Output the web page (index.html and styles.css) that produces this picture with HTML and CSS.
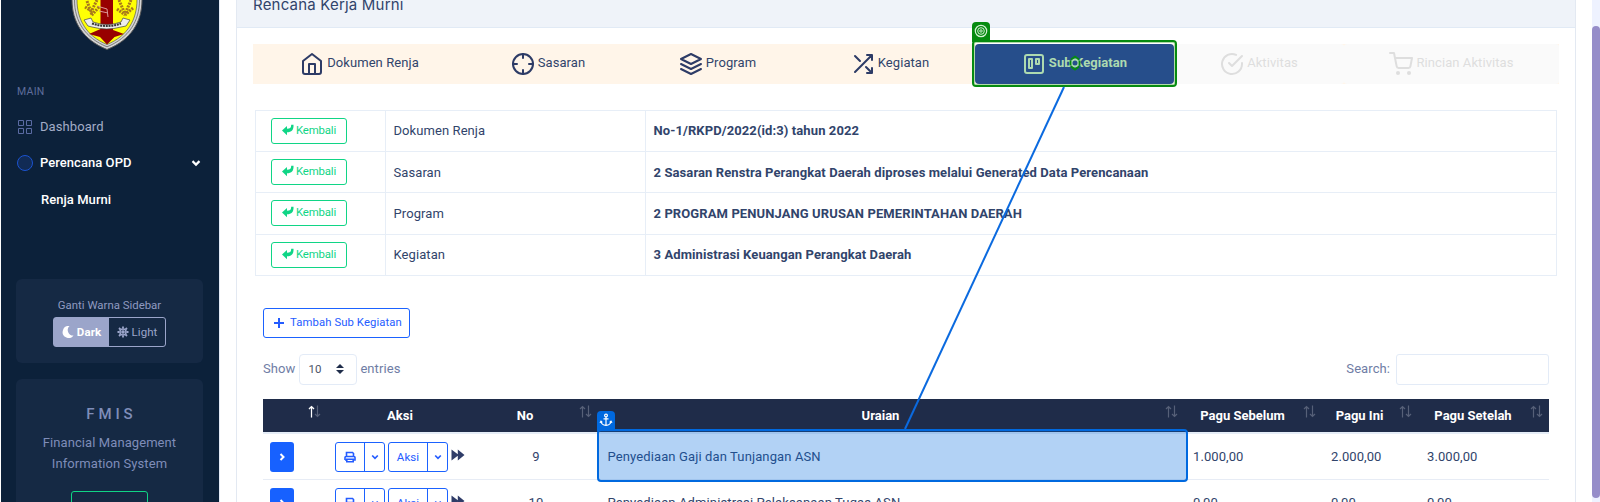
FILE: index.html
```
<!DOCTYPE html>
<html lang="id">
<head>
<meta charset="utf-8">
<title>Rencana Kerja Murni</title>
<link rel="stylesheet" href="styles.css">
</head>
<body>
<svg class="defs" aria-hidden="true">
  <symbol id="back" viewBox="0 0 12 12"><path d="M0 6.500 5 2V4.800C8 4.800 9.200 3.800 9.200.8H11.500C11.900 6 9.500 8.300 5 8.300v2.900z" fill="currentColor"/></symbol>
  <symbol id="chev" viewBox="0 0 8 8"><path d="M1.200 2.500 4 5.300 6.800 2.500" fill="none" stroke="currentColor" stroke-width="1.700"/></symbol>
  <symbol id="chevr" viewBox="0 0 8 8"><path d="M2.500 1 5.500 4 2.500 7" fill="none" stroke="currentColor" stroke-width="2"/></symbol>
  <symbol id="print" viewBox="0 0 12 12"><path d="M2.500 5V1.500h6l1 1V5M1 9V6.500Q1 5.500 2 5.500h8q1 0 1 1V9H9.500M1 9h1.500M2.800 8.200h6.400v2.600H2.800z" fill="none" stroke="currentColor" stroke-width="1.600"/></symbol>
  <symbol id="fwd" viewBox="0 0 14 12"><path d="M.5.500 6.800 5.200V.500L13.500 6 6.800 11.500V6.800L.5 11.500z" fill="currentColor"/></symbol>
  <symbol id="sort" viewBox="0 0 13 13"><path d="M3.500 12.500V1.500M1 4 3.500 1.500 6 4" fill="none" stroke="#566078" stroke-width="1.200"/><path d="M9.500.5v11M7 9l2.500 2.500L12 9" fill="none" stroke="#566078" stroke-width="1.200"/></symbol>
</svg>

<aside class="sidebar">
  <svg class="logo" viewBox="0 0 72 70">
    <path d="M1 0V20C1 42 12 60 36 69.500 60 60 71 42 71 20V0z" fill="#d4d4d4" stroke="#555" stroke-width="1"/>
    <path d="M3.500 0V20C3.500 41 14 58 36 66.800 58 58 68.500 41 68.500 20V0z" fill="none" stroke="#666" stroke-width=".8"/>
    <path d="M6 0V20C6 39 15 56 36 64.500 57 56 66 39 66 20V0z" fill="#ffff05" stroke="#444" stroke-width=".6"/>
    <path d="M29.500 0H42V50L53 54 43.500 57 36 64.500 29 57 18 54 29.500 49z" fill="#980000"/>
    <path d="M26 26 36 29 37 37M28 31 37 33" fill="none" stroke="#d99" stroke-width="1"/>
    <path d="M16 21 21 35M26 20 20 32M14 27l8 5M28 27l-8 9M48 20l6 14M60 20l-6 14M46 29l8 6M62 28l-8 7" stroke="#a8791c" stroke-width="3" stroke-dasharray="2 1"/>
    <path d="M13 40 20 38 22 42Q36 47 50 42L52 38 59 40 55 46 50 47Q36 51 21 47L17 46z" fill="#eee" stroke="#444" stroke-width=".7"/>
    <path d="M21 43.500Q36 48.500 50 43.500" fill="none" stroke="#333" stroke-width="2" stroke-dasharray="2 .8"/>
  </svg>
  <nav class="menu">
    <div class="menu-title">MAIN</div>
    <a class="item"><svg width="16" height="16" viewBox="0 0 16 16" fill="none" stroke="#5b6ba3"><path d="M1.500 1.500h5v5h-5zM9.500 1.500h5v5h-5zM1.500 9.500h5v5h-5zM9.500 9.500h5v5h-5z"/></svg><span>Dashboard</span></a>
    <a class="item active"><i class="dot"></i><span>Perencana OPD</span><svg class="chev" width="10" height="10"><use href="#chev"/></svg></a>
    <a class="item sub">Renja Murni</a>
  </nav>
  <section class="box theme">
    <div class="caption">Ganti Warna Sidebar</div>
    <div class="toggle">
      <span class="on"><svg width="12" height="12" viewBox="0 0 12 12"><path d="M7.500 0A6 6 0 1 0 11.500 9.500 5.500 5.500 0 0 1 7.500 0z" fill="#fff"/></svg>Dark</span>
      <span><svg width="12" height="12" viewBox="0 0 12 12" fill="none" stroke="#9ba5ca"><circle cx="6" cy="6" r="3" stroke-width="1.500"/><circle cx="6" cy="6" r="1.300" fill="#9ba5ca"/><path d="M6 .5v2M6 9.500v2M.5 6h2M9.500 6h2M2 2l1.500 1.500M8.500 8.500 10 10M10 2 8.500 3.500M3.500 8.500 2 10" stroke-width="1.800"/></svg>Light</span>
    </div>
  </section>
  <section class="box about">
    <h4>F M I S</h4>
    <p>Financial Management<br>Information System</p>
    <div class="more"></div>
  </section>
</aside>

<main class="card">
  <header class="card-head">Rencana Kerja Murni</header>
  <div class="tabs">
    <div class="tab"><svg viewBox="0 0 24 24"><path d="m3 9 9-7 9 7v11a2 2 0 0 1-2 2H5a2 2 0 0 1-2-2z"/><path d="M9 22V12h6v10"/></svg>Dokumen Renja</div>
    <div class="tab"><svg viewBox="0 0 24 24"><circle cx="12" cy="12" r="10"/><path d="M22 12h-4M6 12H2M12 6V2M12 22v-4"/></svg>Sasaran</div>
    <div class="tab"><svg viewBox="0 0 24 24"><path d="M12 2 2 7l10 5 10-5zM2 17l10 5 10-5M2 12l10 5 10-5"/></svg>Program</div>
    <div class="tab"><svg viewBox="0 0 24 24"><path d="M16 3h5v5M4 20 21 3M21 16v5h-5M15 15l6 6M4 4l5 5"/></svg>Kegiatan</div>
    <div class="tab current"><svg viewBox="0 0 24 24"><rect x="3" y="3" width="18" height="18" rx="2"/><path d="M7 7h3v9H7zM14 7h3v5h-3z"/></svg>Sub Kegiatan</div>
    <div class="tab off"><svg viewBox="0 0 24 24"><path d="M22 11.080V12a10 10 0 1 1-5.930-9.140"/><path d="M22 4 12 14.010l-3-3"/></svg>Aktivitas</div>
    <div class="tab off"><svg viewBox="0 0 24 24"><circle cx="9" cy="21" r="1"/><circle cx="20" cy="21" r="1"/><path d="M1 1h4l2.680 13.390a2 2 0 0 0 2 1.610h9.720a2 2 0 0 0 2-1.610L23 6H6"/></svg>Rincian Aktivitas</div>
  </div>

  <div class="info">
    <div class="info-row"><div><span class="back"><svg><use href="#back"/></svg>Kembali</span></div><div>Dokumen Renja</div><div><b>No-1/RKPD/2022(id:3) tahun 2022</b></div></div>
    <div class="info-row"><div><span class="back"><svg><use href="#back"/></svg>Kembali</span></div><div>Sasaran</div><div><b>2 Sasaran Renstra Perangkat Daerah diproses melalui Generated Data Perencanaan</b></div></div>
    <div class="info-row"><div><span class="back"><svg><use href="#back"/></svg>Kembali</span></div><div>Program</div><div><b>2 PROGRAM PENUNJANG URUSAN PEMERINTAHAN DAERAH</b></div></div>
    <div class="info-row"><div><span class="back"><svg><use href="#back"/></svg>Kembali</span></div><div>Kegiatan</div><div><b>3 Administrasi Keuangan Perangkat Daerah</b></div></div>
  </div>

  <div class="list">
    <div class="add"><svg width="10" height="10" viewBox="0 0 10 10"><path d="M5 0v10M0 5h10" stroke="currentColor" stroke-width="2"/></svg>Tambah Sub Kegiatan</div>
    <div class="tools">
      <span class="label">Show</span>
      <span class="select">10<svg width="8" height="10" viewBox="0 0 8 10"><path d="M4 0 8 4H0zM0 6h8L4 10z" fill="#1f2d4a"/></svg></span>
      <span class="label">entries</span>
      <span class="label search">Search:</span><span class="field"></span>
    </div>
    <div class="grid thead">
      <div class="sort"><svg><use href="#sort"/><path d="M3.500 12.500V1.500M1 4 3.500 1.500 6 4" fill="none" stroke="#fff" stroke-width="1.200"/></svg></div><div>Aksi</div><div class="sort">No<svg><use href="#sort"/></svg></div><div class="sort">Uraian<svg><use href="#sort"/></svg></div><div class="sort">Pagu Sebelum<svg><use href="#sort"/></svg></div><div class="sort">Pagu Ini<svg><use href="#sort"/></svg></div><div class="sort">Pagu Setelah<svg><use href="#sort"/></svg></div>
    </div>
    <div class="grid row">
      <div><span class="expand"><svg><use href="#chevr"/></svg></span></div>
      <div class="actions"><span class="group g1"><i><svg width="12" height="12"><use href="#print"/></svg></i><i><svg width="8" height="8"><use href="#chev"/></svg></i></span><span class="group g2"><i>Aksi</i><i><svg width="8" height="8"><use href="#chev"/></svg></i></span><svg class="fwd"><use href="#fwd"/></svg></div>
      <div class="num">9</div><div class="desc">Penyediaan Gaji dan Tunjangan ASN</div><div>1.000,00</div><div>2.000,00</div><div>3.000,00</div>
    </div>
    <div class="grid row">
      <div><span class="expand"><svg><use href="#chevr"/></svg></span></div>
      <div class="actions"><span class="group g1"><i><svg width="12" height="12"><use href="#print"/></svg></i><i><svg width="8" height="8"><use href="#chev"/></svg></i></span><span class="group g2"><i>Aksi</i><i><svg width="8" height="8"><use href="#chev"/></svg></i></span><svg class="fwd"><use href="#fwd"/></svg></div>
      <div class="num">10</div><div class="desc">Penyediaan Administrasi Pelaksanaan Tugas ASN</div><div>0,00</div><div>0,00</div><div>0,00</div>
    </div>
  </div>
</main>
<div class="scroll"><div class="thumb"></div></div>

<div class="mark target"><span class="tag"><svg width="14" height="14" viewBox="0 0 14 14" fill="none" stroke="#d5f0d5"><circle cx="7" cy="7" r="5.700" stroke-width="1.200"/><circle cx="7" cy="7" r="3.300"/><circle cx="7" cy="7" r="1.200"/></svg></span></div>
<div class="mark anchor"><span class="tag"><svg width="14" height="14" viewBox="0 0 14 14" fill="none" stroke="#fff" stroke-width="1.200"><circle cx="7" cy="2.500" r="1.400"/><path d="M7 4v8.500M4.500 5.800h5M2 8.500Q2.500 12 7 12.500 11.500 12 12 8.500M1 9.800 2 8.200 3.300 9.500M13 9.800 12 8.200 10.700 9.500"/></svg></span></div>
<svg class="link" width="1600" height="502" viewBox="0 0 1600 502"><path d="M1064 87 905 429" stroke="#0b6adf" stroke-width="2"/><circle cx="1075" cy="63" r="3.500" fill="#264e8b" stroke="#a9dcab" stroke-width="2"/><path d="M1071 59.500 1075 56.500 1079 59.500M1071 66.500 1075 69.500 1079 66.500M1070.500 60.500v5M1079.500 60.500v5" fill="none" stroke="#068b10" stroke-width="1.800"/></svg>
</body>
</html>
```
FILE: styles.css
```
* { box-sizing: border-box; }
body { margin: 0; padding-left: 1px; width: 1600px; height: 502px; overflow: hidden; position: relative; display: flex; background: #fff; font: 13px/20px Roboto, sans-serif; letter-spacing: .08px; color: #31446b; }
.defs { position: absolute; width: 0; height: 0; }
i { font-style: normal; }

.sidebar { width: 219px; height: 502px; flex: none; overflow: hidden; background: #0c213a; border-right: 1px solid #e3ebf7; color: #8f9ac0; }
.logo { display: block; width: 72px; height: 70px; margin: -20px 0 0 70px; }
.menu { padding: 32px 15px 0 16px; height: 229px; }
.menu-title { font-size: 10.500px; line-height: 20px; letter-spacing: .3px; color: #5f6d9a; }
.item { display: flex; align-items: center; height: 36px; color: #a3adc7; }
.menu-title + .item { margin-top: 7px; }
.item > svg:first-child, .dot { width: 16px; height: 16px; margin-right: 7px; flex: none; }
.dot { border: 1px solid #1b53d0; border-radius: 50%; background: #112b55; }
.active, .sub { color: #fff; font-weight: 500; letter-spacing: .05px; }
.chev { margin-left: auto; margin-right: 3px; }
.sub { height: 38px; padding-left: 24px; }
.box { margin: 0 16px 16px 15px; border-radius: 6px; background: #152944; text-align: center; }
.theme { height: 84px; padding-top: 16px; }
.caption { font-size: 11.400px; letter-spacing: 0; }
.toggle { display: grid; grid-template-columns: 55px 56px; width: 113px; height: 30px; margin: 2px auto 0; border: 1px solid #9ba5ca; border-radius: 3px; font-size: 11.500px; }
.toggle span { display: flex; align-items: center; justify-content: center; gap: 3px; color: #9ba5ca; }
.toggle .on { background: #9ba5ca; color: #fff; font-weight: 700; }
.about { height: 160px; padding-top: 24px; color: #7f8db9; }
.about h4 { margin: 0; font: 500 15px/22px Roboto, sans-serif; letter-spacing: .1px; }
.about p { margin: 7px 0 17px; line-height: 21px; font-size: 13px; }
.more { width: 77px; height: 30px; margin: auto; border: 1px solid #10d586; border-radius: 3px; }

.card { width: 1340px; margin: -1px 0 0 16px; flex: none; border: 1px solid #e3e9f2; border-bottom: 0; }
.card-head { height: 28px; padding-left: 16px; line-height: 9px; background: #eff3f9; border-bottom: 1px solid #e1eaf5; font-family: Inter, sans-serif; font-size: 15px; letter-spacing: .2px; }
.tabs { margin: 16px 16px 0; height: 40px; display: grid; grid-template-columns: 215px 162px 177px 168px 199px 170px 215px; background: #fff5e9; }
.tab { display: flex; align-items: center; justify-content: center; gap: 3px; padding: 0 2px 2px 0; }
.tab svg { width: 24px; height: 24px; position: relative; top: 1px; fill: none; stroke: #2d3b66; stroke-width: 2; stroke-linecap: round; stroke-linejoin: round; }
.current { background: #264e8b; color: #addab0; font-weight: 700; border-radius: 4px; padding-right: 0; }
.current svg { stroke: #addab0; }
.off { background: #fafafa; border-radius: 3px; color: #dedede; padding-right: 0; }
.off svg { stroke: #dedede; }

.info { margin: 26px 18px 0; border: 1px solid #e7eef7; width: 1302px; }
.info-row { display: grid; grid-template-columns: 130px 260px 1fr; height: 41px; border-bottom: 1px solid #e7eef7; }
.info-row:nth-child(3) { height: 42px; }
.info-row:last-child { border: 0; height: 40px; }
.info-row > div { display: flex; align-items: center; padding-left: 7.500px; border-right: 1px solid #e7eef7; }
.info-row:nth-child(2) > div { padding-top: 1px; }
.info-row > div:first-child { padding-left: 15px; padding-bottom: 1px; }
.info-row > div:last-child { border: 0; }
.back { display: flex; align-items: center; width: 76px; height: 26px; padding: 0 0 2px 10px; border: 1px solid #10d586; border-radius: 3px; color: #10d586; font-size: 11.400px; letter-spacing: -.15px; }
.back svg { width: 12px; height: 12px; margin-right: 2px; }
b { font-weight: 700; letter-spacing: .1px; }

.list { margin: 32px 26px 0; }
.add { display: flex; align-items: center; gap: 6px; width: 147px; height: 30px; padding-left: 10px; border: 1px solid #1b62ff; border-radius: 3px; color: #245cff; font-size: 11.300px; letter-spacing: .1px; }
.tools { display: flex; align-items: center; height: 31px; margin-top: 16px; color: #6f7da5; }
.label { padding-bottom: 2px; }
.select { display: flex; align-items: center; justify-content: space-between; width: 58px; height: 31px; margin: 0 3px 0 4px; padding: 0 12px 1px 8px; border: 1px solid #e3ebf7; border-radius: 4px; color: #4c5568; font-size: 11.500px; }
.search { margin-left: auto; }
.field { width: 153px; height: 31px; margin-left: 6px; border: 1px solid #e3ebf7; border-radius: 3px; }
.grid { width: 1286px; display: grid; grid-template-columns: 64px 146px 125px 586px 138px 96px 131px; }
.thead { height: 35px; margin-top: 14px; background: #1f2c49; border-bottom: 2px solid #e5edf7; color: #fff; font-weight: 700; text-align: center; line-height: 33px; letter-spacing: 0; }
.sort { position: relative; padding: 0 30px 0 9px; }
.sort svg { position: absolute; top: 6px; right: 6px; width: 13px; height: 13px; }
.row { height: 45px; border-bottom: 1px solid #e7ecf5; }
.row:nth-last-child(2) { height: 46px; }
.row > div { padding: 13px 0 0 9px; }
.row > div:first-child, .row > .actions { padding: 8px 0 0 7px; }
.row > .num { padding-left: 1px; text-align: center; }
.row > .desc { padding-left: 9.500px; letter-spacing: .12px; }
.expand { display: flex; align-items: center; justify-content: center; width: 24px; height: 30px; border-radius: 3px; background: #1761ff; color: #fff; }
.expand svg { width: 8px; height: 8px; }
.actions { display: flex; }
.group { display: grid; height: 30px; border: 1px solid #1b62ff; border-radius: 3px; color: #245cff; font-size: 11.500px; margin-right: 3px; }
.group i { display: flex; align-items: center; justify-content: center; }
.group i:first-child { border-right: 1px solid #1b62ff; }
.g1 { width: 50px; grid-template-columns: 29px 19px; margin-left: 1px; }
.g2 { width: 60px; grid-template-columns: 39px 19px; }
.fwd { width: 14px; height: 12px; margin-top: 7px; color: #2f3c68; }

.scroll { margin-left: auto; width: 8px; height: 502px; padding-top: 26px; background: #eef2ff; overflow: hidden; }
.thumb { height: 472px; border-radius: 4px; background: #968dc9; }

.mark { position: absolute; border: 2px solid; border-radius: 4px; }
.tag { position: absolute; left: -2px; top: -20px; width: 18px; height: 20px; padding: 2px; border-radius: 4px 4px 0 0; line-height: 0; }
.target { left: 972px; top: 40px; width: 205px; height: 47px; border-color: #068b10; box-shadow: inset 0 0 0 1px #b0d9aa; }
.target .tag { background: #068b10; }
.anchor { left: 597px; top: 429px; width: 591px; height: 53px; border-color: #0069df; background: rgba(0, 105, 223, .3); }
.anchor .tag { background: #0069df; }
.link { position: absolute; left: 0; top: 0; }
```
